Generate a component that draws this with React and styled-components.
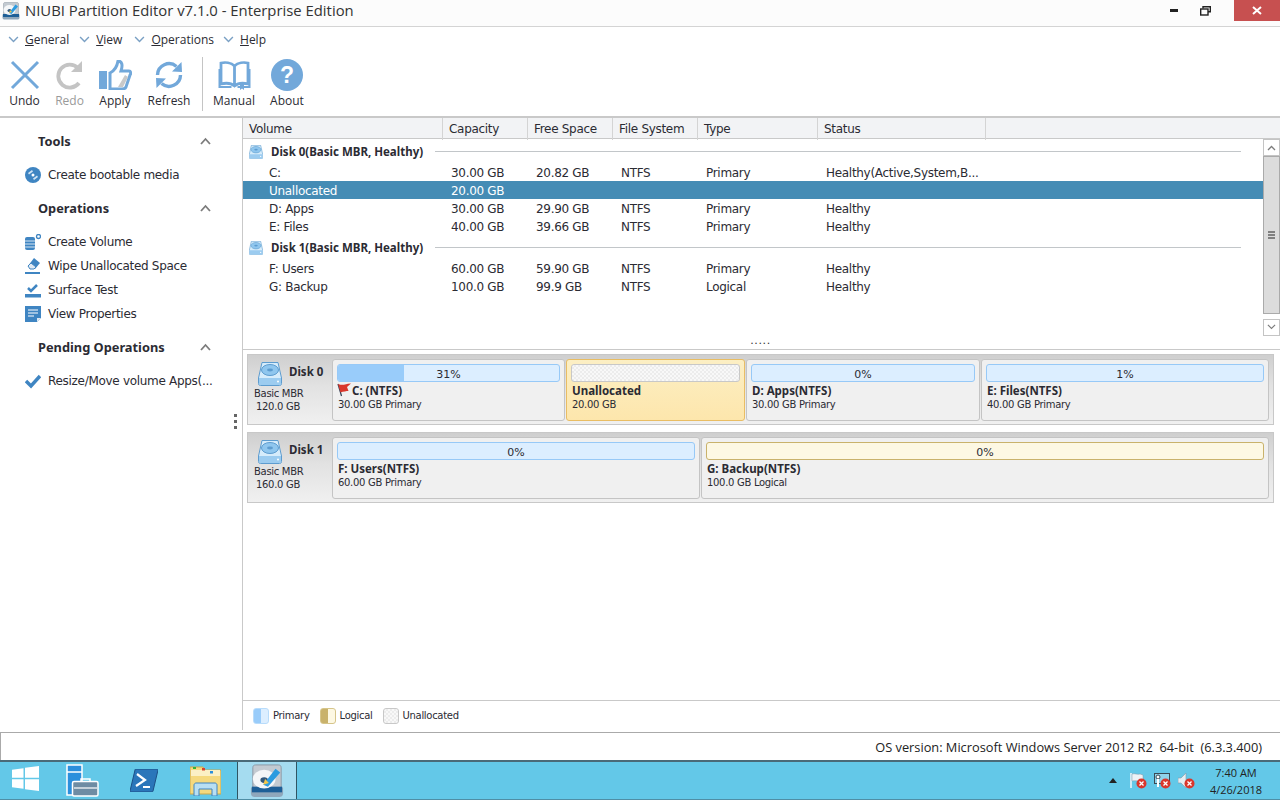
import React from 'react';
import styled, { createGlobalStyle } from 'styled-components';

const GlobalStyle = createGlobalStyle`
  * { box-sizing: border-box; }
  html, body { margin: 0; padding: 0; background: #fff; overflow: hidden; }
  body { font-family: "DejaVu Sans", sans-serif; font-size: 12px; color: #2b2b33; }
`;

const uiFont = '"Open Sans", "Noto Sans", sans-serif';
const boldFont = '"Noto Sans", "DejaVu Sans", sans-serif';
const blue = '#72a8da';

const Page = styled.div`
  width: 1280px;
  height: 800px;
  display: flex;
  flex-direction: column;
  background: #fff;
`;

const TitleBar = styled.div`
  height: 27px;
  flex: none;
  display: flex;
  align-items: flex-start;
  background: #fcfcfc;
  border-bottom: 1px solid #d4d4d4;
`;

const AppIcon = styled.span`
  width: 18px;
  height: 18px;
  margin: 2px 0 0 2px;
  display: flex;
`;

const Title = styled.div`
  margin-left: 5px;
  line-height: 21px;
  font-family: ${uiFont};
  font-size: 14.85px;
  color: #333;
  flex: 1;
`;

const WinBtn = styled.div`
  width: ${(p) => p.$w}px;
  height: 21px;
  display: flex;
  align-items: center;
  justify-content: center;
  background: ${(p) => p.$bg || 'transparent'};
`;

const MenuBar = styled.div`
  height: 25px;
  flex: none;
  display: flex;
  align-items: center;
  padding-left: 8px;
  font-family: ${uiFont};
  font-size: 12px;
`;

const Menu = styled.div`
  display: flex;
  align-items: center;
  gap: 6px;
  margin-right: ${(p) => p.$mr}px;
  u { text-underline-offset: 1px; }
`;

const Toolbar = styled.div`
  height: 64px;
  flex: none;
  display: flex;
  padding-left: 2px;
  border-bottom: 1px solid #fff;
`;

const ToolButton = styled.div`
  width: ${(p) => p.$w}px;
  display: flex;
  flex-direction: column;
  align-items: center;
  padding-top: 7px;
  font-family: ${uiFont};
  font-size: 12px;
  color: ${(p) => (p.$off ? '#9a9a9a' : '#2b2b33')};
  span { margin-top: 1px; line-height: 18px; }
`;

const ToolSep = styled.div`
  width: 1px;
  height: 54px;
  margin: 5px 4px 0 2px;
  background: #c4c4c4;
`;

const Help = styled.div`
  width: 32px;
  height: 32px;
  border-radius: 50%;
  background: ${blue};
  color: #fff;
  font: bold 23px/32px "Liberation Sans", sans-serif;
  text-align: center;
`;

const ToolIcon = styled.div`
  height: 32px;
  display: flex;
  align-items: center;
`;

const Main = styled.div`
  height: 614px;
  flex: none;
  display: flex;
  border-top: 2px solid #c9c9c9;
`;

const Sidebar = styled.div`
  position: relative;
  width: 243px;
  flex: none;
  padding: 12px 0 0 25px;
  border-right: 1px solid #c9c9c9;
`;

const SectionHead = styled.div`
  height: 24px;
  display: flex;
  align-items: center;
  justify-content: space-between;
  padding: 0 31px 2px 13px;
  font-family: ${boldFont};
  font-weight: bold;
  font-size: 12.8px;
  margin-top: ${(p) => (p.$first ? 0 : 10)}px;
`;

const SideList = styled.div`
  margin-top: 9px;
`;

const SideItem = styled.div`
  height: 24px;
  display: flex;
  align-items: center;
  gap: 7px;
  font-size: 12px;
  letter-spacing: -0.3px;
  svg { flex: none; }
`;

const Dots = styled.div`
  position: absolute;
  left: 234px;
  top: 296px;
  width: 3px;
  height: 16px;
  background: repeating-linear-gradient(#666 0 3px, transparent 3px 6px);
`;

const Content = styled.div`
  flex: 1;
  min-width: 0;
  display: flex;
  flex-direction: column;
`;

const cols = '200px 85px 85px 85px 120px 168px';

const TableHead = styled.div`
  height: 21px;
  flex: none;
  display: grid;
  grid-template-columns: ${cols} 1fr;
  background: #f2f3f5;
  border-bottom: 1px solid #c9c9c9;
`;

const HeadCell = styled.div`
  padding-left: 6px;
  line-height: 22px;
  font-size: 12px;
  letter-spacing: -0.3px;
  border-right: ${(p) => (p.$last ? 'none' : '1px solid #d4d4d4')};
`;

const ListArea = styled.div`
  height: 199px;
  flex: none;
  display: flex;
`;

const Rows = styled.div`
  flex: 1;
  min-width: 0;
`;

const DiskHeader = styled.div`
  height: 24px;
  display: flex;
  align-items: center;
  padding: 1px 22px 0 6px;
  font-family: ${boldFont};
  font-weight: bold;
  font-size: 11.5px;
  svg { margin-right: 8px; flex: none; }
  &::after {
    content: '';
    flex: 1;
    height: 1px;
    margin: -1px 0 0 12px;
    background: #c2c6c9;
  }
`;

const Row = styled.div`
  height: 18px;
  display: grid;
  grid-template-columns: ${cols};
  line-height: 20px;
  font-size: 12px;
  letter-spacing: -0.3px;
  background: ${(p) => (p.$selected ? '#458cb5' : 'transparent')};
  color: ${(p) => (p.$selected ? '#fff' : '#2b2b33')};
`;

const Cell = styled.div`
  padding-left: ${(p) => p.$pl || 8}px;
  white-space: nowrap;
  overflow: hidden;
`;

const Scrollbar = styled.div`
  width: 17px;
  flex: none;
  display: flex;
  flex-direction: column;
  padding-bottom: 2px;
`;

const ScrollBtn = styled.div`
  height: 17px;
  flex: none;
  display: flex;
  align-items: center;
  justify-content: center;
  border: 1px solid #c4c4c4;
`;

const ScrollThumb = styled.div`
  height: 158px;
  flex: none;
  display: flex;
  flex-direction: column;
  align-items: center;
  justify-content: center;
  gap: 1px;
  background: #dcdcdc;
  border: 1px solid #aaa;
  i { display: block; width: 7px; height: 2px; background: #808080; }
`;

const ScrollGap = styled.div`
  flex: 1;
`;

const Splitter = styled.div`
  height: 12px;
  flex: none;
  text-align: center;
  line-height: 6px;
  font-size: 11px;
  letter-spacing: 0.6px;
  color: #333;
  padding-right: 2px;
  border-bottom: 1px solid #c9c9c9;
`;

const DiskArea = styled.div`
  flex: 1;
  padding: 4px 0 0 4px;
  display: flex;
  flex-direction: column;
  gap: 7px;
`;

const DiskPanel = styled.div`
  width: 1027px;
  height: 71px;
  flex: none;
  display: flex;
  padding: 4px 4px 3px 0;
  border: 1px solid #c8c8c8;
  background: linear-gradient(#cfcfcf, #e2e2e2 45%, #f0f0f0);
`;

const DiskInfo = styled.div`
  width: 84px;
  flex: none;
  padding-left: 6px;
  font-size: 10px;
  letter-spacing: -0.3px;
  line-height: 13px;
`;

const DiskTitle = styled.div`
  height: 26px;
  display: flex;
  align-items: flex-start;
  gap: 7px;
  margin: 0 0 2px 4px;
  font-family: ${boldFont};
  font-size: 11.5px;
  line-height: 26px;
  font-weight: bold;
  letter-spacing: 0;
  svg { margin-top: 3px; flex: none; }
`;

const DiskLine = styled.div`
  margin-left: ${(p) => p.$ml || 0}px;
`;

const Partitions = styled.div`
  display: flex;
  gap: 1px;
`;

const Partition = styled.div`
  width: ${(p) => p.$w}px;
  height: 62px;
  padding: 4px;
  border-radius: 3px;
  border: 1px solid ${(p) => (p.$selected ? '#e9bd63' : '#c4c4c4')};
  background: ${(p) => (p.$selected ? 'linear-gradient(#fcefc4, #fde6ac)' : '#f0f0f0')};
`;

const checker = `
  background-color: #f6f6f6;
  background-image: repeating-conic-gradient(#ececec 0 25%, #f8f8f8 0 50%);
  background-size: 4px 4px;
`;

const barColors = {
  primary: 'border: 1px solid #97c9f7; background: #dceeff;',
  logical: 'border: 1px solid #c9b26b; background: #fdf8e3;',
  free: `border: 1px solid #c8c8c8; ${checker}`,
};

const Bar = styled.div`
  position: relative;
  height: 18px;
  border-radius: 3px;
  text-align: center;
  line-height: 19px;
  font-size: 11px;
  overflow: hidden;
  ${(p) => barColors[p.$kind]}
`;

const BarFill = styled.div`
  position: absolute;
  left: 0;
  top: 0;
  bottom: 0;
  background: #99ccfa;
`;

const BarText = styled.span`
  position: relative;
`;

const PartName = styled.div`
  display: flex;
  align-items: flex-end;
  height: 13px;
  margin: 2px 0 0 1px;
  font-family: ${boldFont};
  font-size: 11.5px;
  line-height: 13px;
  font-weight: bold;
  svg { flex: none; margin-left: -1px; }
`;

const PartDetail = styled.div`
  margin: 1px 0 0 1px;
  font-size: 10px;
  letter-spacing: -0.3px;
  line-height: 13px;
`;

const Legend = styled.div`
  height: 30px;
  flex: none;
  display: flex;
  align-items: center;
  padding-left: 10px;
  border-top: 1px solid #c9c9c9;
  font-size: 10px;
  letter-spacing: -0.3px;
`;

const LegendItem = styled.div`
  display: flex;
  align-items: center;
  gap: 4px;
  margin-right: 10px;
  line-height: 14px;
  span + * { margin-top: 1px; }
`;

const swatches = {
  primary: 'border: 1px solid #b8dcfb; background: linear-gradient(90deg, #99ccfa 50%, #dceeff 50%);',
  logical: 'border: 1px solid #d6c58a; background: linear-gradient(90deg, #c9b26b 50%, #fdf8e3 50%);',
  free: `border: 1px solid #c8c8c8; ${checker}`,
};

const Swatch = styled.span`
  width: 16px;
  height: 16px;
  border-radius: 3px;
  ${(p) => swatches[p.$kind]}
`;

const LegendLabel = styled.div`
  margin-top: 1px;
`;

const StatusBar = styled.div`
  height: 28px;
  flex: none;
  margin-top: 2px;
  display: flex;
  align-items: center;
  justify-content: flex-end;
  padding-right: 18px;
  border: 1px solid #aaa;
  border-bottom: none;
  border-right: none;
  font-family: ${uiFont};
  font-size: 12.8px;
  white-space: pre;
  color: #222;
`;

const Taskbar = styled.div`
  flex: 1;
  display: flex;
  align-items: stretch;
  background: #63c8e8;
  border-top: 2px solid #4a6a78;
  border-bottom: 1px solid #4f8ea5;
`;

const TaskSlot = styled.div`
  width: ${(p) => p.$w}px;
  flex: none;
  display: flex;
  align-items: center;
  justify-content: center;
  ${(p) => p.$active && 'background: #a5dcf0; border: 1px solid #2f5563; border-width: 0 1px;'}
`;

const StartLogo = styled.svg`
  margin-bottom: 4px;
`;

const Tray = styled.div`
  margin-left: auto;
  display: flex;
  align-items: center;
  gap: 7px;
`;

const TrayArrow = styled.svg`
  margin-right: 6px;
`;

const Clock = styled.div`
  width: 60px;
  margin-left: 4px;
  margin-right: 14px;
  text-align: center;
  font-family: ${uiFont};
  font-size: 11px;
  line-height: 17px;
  color: #222;
`;

const Chevron = ({ size = 11, color = '#7aa0c4' }) => (
  <svg width={size} height={size * 0.7} viewBox="0 0 10 7" fill="none">
    <path d="M1 1l4 4 4-4" stroke={color} strokeWidth="1.3" />
  </svg>
);

const ChevronUp = () => (
  <svg width="11" height="8" viewBox="0 0 11 8" fill="none">
    <path d="M1 7l4.500-5L10 7" stroke="#7c7c7c" strokeWidth="1.800" />
  </svg>
);

const ChevronUpSmall = () => (
  <svg width="9" height="6" viewBox="0 0 9 6" fill="none">
    <path d="M1 5l3.500-3.500L8 5" stroke="#7c7c7c" strokeWidth="1.300" />
  </svg>
);

const UndoIcon = () => (
  <svg width="30" height="30" viewBox="0 0 30 30" fill="none">
    <path d="M2 2l26 26M28 2L2 28" stroke={blue} strokeWidth="3" />
  </svg>
);

const RedoIcon = () => (
  <svg width="27" height="30" viewBox="0 0 27 30" fill="none">
    <path d="M23 23a11.500 11.500 0 1 1-1-15" stroke="#c4c4c4" strokeWidth="3.800" />
    <path d="M26 1v11H15z" fill="#c4c4c4" />
  </svg>
);

const ApplyIcon = () => (
  <svg width="33" height="30" viewBox="0 0 33 30">
    <path d="M0 11h8v18H0z" fill={blue} />
    <path
      d="M11 13c4-2 7-6 8-12 4 0 5 4 3 10h8c2 0 2 3 1 4l-4 12c-1 2-2 2-4 2H11z"
      fill="#fff"
      stroke={blue}
      strokeWidth="3"
    />
    <path d="M19 27l7-12 3 2-5 10z" fill="#c9c9c9" />
  </svg>
);

const RefreshIcon = () => (
  <svg width="30" height="30" viewBox="0 0 30 30" fill="none">
    <path d="M3.500 15a11.500 11.500 0 0 1 19-8.500" stroke={blue} strokeWidth="3.400" />
    <path d="M18 11.500l10 .5-.5-10z" fill={blue} />
    <path d="M26.500 15a11.500 11.500 0 0 1-19 8.500" stroke={blue} strokeWidth="3.400" />
    <path d="M12 18.500l-10-.5.5 10z" fill={blue} />
  </svg>
);

const BookIcon = () => (
  <svg width="33" height="30" viewBox="0 0 33 30" fill="none">
    <path
      d="M16.500 6C13 2.500 7 2 3 3v21c4-1 10-1 13.500 2 3.500-3 9.500-3 13.500-2V3c-4-1-10-.500-13.500 3zM16.500 6v19"
      stroke={blue}
      strokeWidth="2.800"
    />
    <path d="M1.500 9v18h12M31.500 9v18h-12" stroke={blue} strokeWidth="2" />
    <path d="M22 24h4v6l-2-1.500-2 1.500z" fill={blue} />
  </svg>
);

const DiscIcon = () => (
  <svg width="16" height="16" viewBox="0 0 16 16">
    <circle cx="8" cy="8" r="8" fill="#3f85c2" />
    <path d="M3 6l4-3 1 1.500-4 3zM9 13l4-3-1-1.500-4 3z" fill="#cfe3f4" />
    <circle cx="8" cy="8" r="1.500" fill="#fff" />
  </svg>
);

const VolumeIcon = () => (
  <svg width="16" height="16" viewBox="0 0 16 16">
    <rect x="0" y="3" width="10" height="13" rx="2" fill="#3f85c2" />
    <path d="M0 7h10M0 10h10M0 13h10" stroke="#fff" strokeWidth="0.800" />
    <circle cx="13.500" cy="2.500" r="2" fill="none" stroke="#3f85c2" strokeWidth="1.300" />
  </svg>
);

const EraserIcon = () => (
  <svg width="16" height="16" viewBox="0 0 16 16">
    <path d="M9 0l6 5-5 6-2.500-.5L3 8z" fill="#3f85c2" />
    <path d="M3 8l3-3 5 4-2 2H5z" fill="#dfe9f3" stroke="#3f85c2" strokeWidth="1" />
    <rect y="14" width="15" height="2" fill="#3f85c2" />
  </svg>
);

const SurfaceIcon = () => (
  <svg width="16" height="16" viewBox="0 0 16 16" fill="none">
    <path d="M3 6l3 3 6-6" stroke="#3f85c2" strokeWidth="2.500" />
    <rect y="12" width="16" height="3.500" fill="#3f85c2" />
  </svg>
);

const PropsIcon = () => (
  <svg width="16" height="16" viewBox="0 0 16 16">
    <path d="M0 0h16v12l-4 4H0z" fill="#3f85c2" />
    <path d="M3 4h10M3 7h10M3 10h6" stroke="#fff" strokeWidth="1.200" />
    <path d="M12 16v-4h4z" fill="#dfe9f3" />
  </svg>
);

const CheckIcon = () => (
  <svg width="16" height="16" viewBox="0 0 16 16" fill="none">
    <path d="M1 8l5 5 9-10" stroke="#3f85c2" strokeWidth="3.400" />
  </svg>
);

const HddIcon = ({ size = 24 }) => (
  <svg width={size} height={size} viewBox="0 0 24 24">
    <path d="M4 .500h16L23.500 16v5.500a2 2 0 0 1-2 2h-19a2 2 0 0 1-2-2V16z" fill="#d6ecfb" stroke="#5d9ccf" />
    <path d="M1 16h22v5.500a1.500 1.500 0 0 1-1.500 1.500h-19A1.500 1.500 0 0 1 1 21.500z" fill="#9cccf0" />
    <ellipse cx="12" cy="8" rx="8.500" ry="5.500" fill="#8fc6ee" stroke="#5d9ccf" />
    <ellipse cx="12" cy="8" rx="3" ry="1.400" fill="#5d9ccf" />
    <circle cx="20" cy="19.500" r="1" fill="#fff" />
  </svg>
);

const FlagIcon = () => (
  <svg width="15" height="14" viewBox="0 0 15 14">
    <path d="M1 1l3.500 12" stroke="#2f3f55" strokeWidth="1.200" fill="none" />
    <path d="M1 1c3 1 5 1 7 .5s4-1 6-1L10 4l1.500 4c-2 0-5 .5-8 1.500z" fill="#d9372c" />
  </svg>
);

const NiubiIcon = ({ size = 18 }) => (
  <svg width={size} height={size} viewBox="0 0 36 36">
    <path d="M6 1h24c2 0 3 1 3 3v24H3V4c0-2 1-3 3-3z" fill="#c3cad1" stroke="#8b96a1" />
    <path d="M1 25h34v6c0 3-2 4-4 4H5c-2 0-4-1-4-4z" fill="#8fa7bb" />
    <path d="M2 24h32v6H2z" fill="#1d5f97" />
    <ellipse cx="15" cy="16" rx="12" ry="10" fill="#f4f6f8" />
    <ellipse cx="15" cy="17" rx="4" ry="3" fill="#33587c" />
    <path d="M14 22L27 5l5 4-13 15z" fill="#2b9be0" />
    <path d="M14 22l2-6 4 4z" fill="#f3c74b" />
  </svg>
);

const ServerIcon = () => (
  <svg width="33" height="33" viewBox="0 0 33 33">
    <rect x="1" y="1" width="15" height="30" fill="#2b8fdc" stroke="#fff" strokeWidth="1.500" />
    <path d="M1 8h15" stroke="#fff" strokeWidth="1.500" />
    <path d="M15 18v-3h9v3" fill="none" stroke="#fff" strokeWidth="1.500" />
    <rect x="6.500" y="17.500" width="25.500" height="14.500" rx="1.500" fill="#6e8ca3" stroke="#fff" strokeWidth="1.500" />
    <path d="M8 24h23" stroke="#fff" strokeWidth="1.200" />
  </svg>
);

const ShellIcon = () => (
  <svg width="28" height="23" viewBox="0 0 28 23">
    <path d="M6 0h21c1 0 1 1 1 1l-5 21s0 1-2 1H1s-1 0-1-1L5 1s0-1 1-1z" fill="#2a76ba" stroke="#1c4f86" />
    <path d="M7 5l8 6-9 6" fill="none" stroke="#fff" strokeWidth="2.200" />
    <path d="M13 18h7" stroke="#fff" strokeWidth="2" />
  </svg>
);

const FolderIcon = () => (
  <svg width="31" height="31" viewBox="0 0 31 31">
    <path d="M0 2h13l2 3h16v24H0z" fill="#f5d97e" stroke="#c9a94e" />
    <rect x="1" y="5" width="29" height="6" fill="#fbf0c5" />
    <rect x="3" y="2" width="3" height="2" fill="#35b33a" />
    <rect x="12" y="3" width="3" height="2.500" fill="#d8402f" />
    <rect x="20" y="6" width="3" height="2.500" fill="#2b8fdc" />
    <path d="M4 31V20c0-1 1-2 2-2h19c1 0 2 1 2 2v11h-5v-7H9v7z" fill="#b8dff3" stroke="#3f85c2" />
  </svg>
);

const TrayBadge = () => (
  <>
    <circle cx="11.500" cy="11.500" r="5" fill="#d9362c" />
    <path d="M9.500 9.500l4 4M13.500 9.500l-4 4" stroke="#fff" strokeWidth="1.300" />
  </>
);

const TrayFlag = () => (
  <svg width="17" height="17" viewBox="0 0 17 17">
    <path d="M1 1v15" stroke="#f4f7fa" strokeWidth="1.500" />
    <path d="M2 2c3-1 5 1 8 0l3 1v6c-3 1-7-1-11 0z" fill="#eef3f7" stroke="#8497a5" strokeWidth="0.500" />
    <TrayBadge />
  </svg>
);

const TrayNet = () => (
  <svg width="17" height="17" viewBox="0 0 17 17" fill="none">
    <rect x="0.500" y="1.500" width="15" height="10" fill="#8fd3ea" stroke="#3a4a54" />
    <circle cx="4" cy="5" r="2" fill="#fff" stroke="#3a4a54" />
    <path d="M4 7v8" stroke="#fff" strokeWidth="2" />
    <TrayBadge />
  </svg>
);

const TraySound = () => (
  <svg width="17" height="17" viewBox="0 0 17 17">
    <path d="M0 6h3l5-5v15l-5-5H0z" fill="#e6edf2" stroke="#8497a5" strokeWidth="0.600" />
    <TrayBadge />
  </svg>
);

const tools = [
  { label: 'Undo', w: 45, icon: <UndoIcon /> },
  { label: 'Redo', w: 45, icon: <RedoIcon />, off: true },
  { label: 'Apply', w: 46, icon: <ApplyIcon /> },
  { label: 'Refresh', w: 62, icon: <RefreshIcon /> },
];

const disks = [
  {
    name: 'Disk 0',
    size: '120.0 GB',
    header: 'Disk 0(Basic MBR, Healthy)',
    rows: [
      ['C:', '30.00 GB', '20.82 GB', 'NTFS', 'Primary', 'Healthy(Active,System,B...'],
      ['Unallocated', '20.00 GB', '', '', '', '', true],
      ['D: Apps', '30.00 GB', '29.90 GB', 'NTFS', 'Primary', 'Healthy'],
      ['E: Files', '40.00 GB', '39.66 GB', 'NTFS', 'Primary', 'Healthy'],
    ],
    parts: [
      { w: 233, kind: 'primary', pct: '31%', fill: 30, name: 'C: (NTFS)', detail: '30.00 GB Primary', flag: true },
      { w: 179, kind: 'free', name: 'Unallocated', detail: '20.00 GB', selected: true },
      { w: 234, kind: 'primary', pct: '0%', name: 'D: Apps(NTFS)', detail: '30.00 GB Primary' },
      { w: 288, kind: 'primary', pct: '1%', name: 'E: Files(NTFS)', detail: '40.00 GB Primary' },
    ],
  },
  {
    name: 'Disk 1',
    size: '160.0 GB',
    header: 'Disk 1(Basic MBR, Healthy)',
    rows: [
      ['F: Users', '60.00 GB', '59.90 GB', 'NTFS', 'Primary', 'Healthy'],
      ['G: Backup', '100.0 GB', '99.9 GB', 'NTFS', 'Logical', 'Healthy'],
    ],
    parts: [
      { w: 368, kind: 'primary', pct: '0%', name: 'F: Users(NTFS)', detail: '60.00 GB Primary' },
      { w: 568, kind: 'logical', pct: '0%', name: 'G: Backup(NTFS)', detail: '100.0 GB Logical' },
    ],
  },
];

const sections = [
  { title: 'Tools', items: [[<DiscIcon key="i" />, 'Create bootable media']] },
  {
    title: 'Operations',
    items: [
      [<VolumeIcon key="i" />, 'Create Volume'],
      [<EraserIcon key="i" />, 'Wipe Unallocated Space'],
      [<SurfaceIcon key="i" />, 'Surface Test'],
      [<PropsIcon key="i" />, 'View Properties'],
    ],
  },
  { title: 'Pending Operations', items: [[<CheckIcon key="i" />, 'Resize/Move volume Apps(...']] },
];

const App = () => (
  <Page>
    <GlobalStyle />
    <TitleBar>
      <AppIcon><NiubiIcon /></AppIcon>
      <Title>NIUBI Partition Editor v7.1.0 - Enterprise Edition</Title>
      <WinBtn $w={32}>
        <svg width="8" height="3" viewBox="0 0 8 3"><rect width="8" height="3" fill="#222" /></svg>
      </WinBtn>
      <WinBtn $w={31}>
        <svg width="11" height="10" viewBox="0 0 11 10" fill="none" stroke="#222" strokeWidth="1.400">
          <path d="M3 2.500V.7h7.300v5H8" />
          <rect x="0.700" y="3" width="7.300" height="6" />
        </svg>
      </WinBtn>
      <WinBtn $w={13} />
      <WinBtn $w={46} $bg="#c75050">
        <svg width="10" height="9" viewBox="0 0 10 9" fill="none">
          <path d="M1 1l8 7M9 1L1 8" stroke="#fff" strokeWidth="2" />
        </svg>
      </WinBtn>
    </TitleBar>

    <MenuBar>
      <Menu $mr={10}><Chevron /><span><u>G</u>eneral</span></Menu>
      <Menu $mr={12}><Chevron /><span><u>V</u>iew</span></Menu>
      <Menu $mr={9}><Chevron /><span><u>O</u>perations</span></Menu>
      <Menu $mr={0}><Chevron /><span><u>H</u>elp</span></Menu>
    </MenuBar>

    <Toolbar>
      {tools.map((t) => (
        <ToolButton key={t.label} $w={t.w} $off={t.off}>
          <ToolIcon>{t.icon}</ToolIcon>
          <span>{t.label}</span>
        </ToolButton>
      ))}
      <ToolSep />
      <ToolButton $w={54}>
        <ToolIcon><BookIcon /></ToolIcon>
        <span>Manual</span>
      </ToolButton>
      <ToolButton $w={52}>
        <Help>?</Help>
        <span>About</span>
      </ToolButton>
    </Toolbar>

    <Main>
      <Sidebar>
        {sections.map((s, i) => (
          <div key={s.title}>
            <SectionHead $first={i === 0}>
              {s.title}
              <ChevronUp />
            </SectionHead>
            <SideList>
              {s.items.map(([icon, label]) => (
                <SideItem key={label}>{icon}{label}</SideItem>
              ))}
            </SideList>
          </div>
        ))}
        <Dots />
      </Sidebar>

      <Content>
        <TableHead>
          <HeadCell>Volume</HeadCell>
          <HeadCell>Capacity</HeadCell>
          <HeadCell>Free Space</HeadCell>
          <HeadCell>File System</HeadCell>
          <HeadCell>Type</HeadCell>
          <HeadCell>Status</HeadCell>
          <HeadCell $last />
        </TableHead>

        <ListArea>
          <Rows>
            {disks.map((d) => (
              <div key={d.name}>
                <DiskHeader><HddIcon size={14} />{d.header}</DiskHeader>
                {d.rows.map((r) => (
                  <Row key={r[0]} $selected={r[6]}>
                    <Cell $pl={26}>{r[0]}</Cell>
                    <Cell>{r[1]}</Cell>
                    <Cell>{r[2]}</Cell>
                    <Cell>{r[3]}</Cell>
                    <Cell>{r[4]}</Cell>
                    <Cell>{r[5]}</Cell>
                  </Row>
                ))}
              </div>
            ))}
          </Rows>
          <Scrollbar>
            <ScrollBtn><ChevronUpSmall /></ScrollBtn>
            <ScrollThumb><i /><i /><i /></ScrollThumb>
            <ScrollGap />
            <ScrollBtn><Chevron size={9} color="#7c7c7c" /></ScrollBtn>
          </Scrollbar>
        </ListArea>

        <Splitter>.....</Splitter>

        <DiskArea>
          {disks.map((d) => (
            <DiskPanel key={d.name}>
              <DiskInfo>
                <DiskTitle><HddIcon />{d.name}</DiskTitle>
                <DiskLine>Basic MBR</DiskLine>
                <DiskLine $ml={2}>{d.size}</DiskLine>
              </DiskInfo>
              <Partitions>
                {d.parts.map((p) => (
                  <Partition key={p.name} $w={p.w} $selected={p.selected}>
                    <Bar $kind={p.kind}>
                      {p.fill && <BarFill style={{ width: `${p.fill}%` }} />}
                      <BarText>{p.pct}</BarText>
                    </Bar>
                    <PartName>{p.flag && <FlagIcon />}{p.name}</PartName>
                    <PartDetail>{p.detail}</PartDetail>
                  </Partition>
                ))}
              </Partitions>
            </DiskPanel>
          ))}
        </DiskArea>

        <Legend>
          <LegendItem><Swatch $kind="primary" /><LegendLabel>Primary</LegendLabel></LegendItem>
          <LegendItem><Swatch $kind="logical" /><LegendLabel>Logical</LegendLabel></LegendItem>
          <LegendItem><Swatch $kind="free" /><LegendLabel>Unallocated</LegendLabel></LegendItem>
        </Legend>
      </Content>
    </Main>

    <StatusBar>OS version: Microsoft Windows Server 2012 R2  64-bit  (6.3.3.400)</StatusBar>

    <Taskbar>
      <TaskSlot $w={50}>
        <StartLogo width="27" height="25" viewBox="0 0 27 27" preserveAspectRatio="none">
          <path d="M0 4l11.500-1.700v10.300H0zM13 2l14-2v12.600H13zM0 14.200h11.500v10.500L0 23zM13 14.200h14V27l-14-2z" fill="#fff" />
        </StartLogo>
      </TaskSlot>
      <TaskSlot $w={64}><ServerIcon /></TaskSlot>
      <TaskSlot $w={60}><ShellIcon /></TaskSlot>
      <TaskSlot $w={63}><FolderIcon /></TaskSlot>
      <TaskSlot $w={60} $active><NiubiIcon size={34} /></TaskSlot>
      <Tray>
        <TrayArrow width="8" height="5" viewBox="0 0 8 5"><path d="M4 0l4 5H0z" fill="#222" /></TrayArrow>
        <TrayFlag />
        <TrayNet />
        <TraySound />
        <Clock>7:40 AM<br />4/26/2018</Clock>
      </Tray>
    </Taskbar>
  </Page>
);

export default App;
